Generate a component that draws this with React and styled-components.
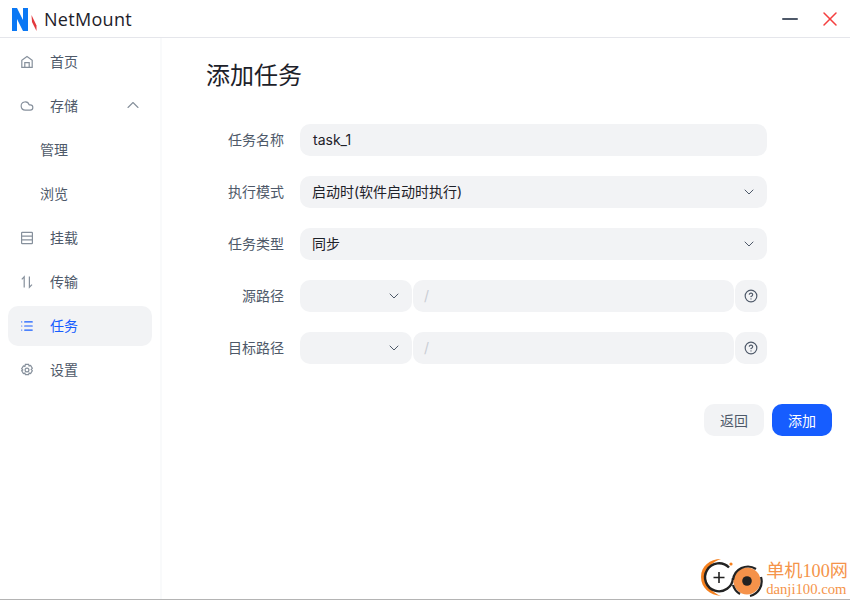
import React from "react";
import styled, { createGlobalStyle } from "styled-components";
import { ChevronDown, ChevronUp, Cloud, List, HelpCircle, Minus, X } from "lucide-react";

const Global = createGlobalStyle`
	html, body { margin: 0; padding: 0; background: #fff; }
	body { font-family: "Inter", "Noto Sans CJK SC", sans-serif; overflow: hidden; }
`;

const Page = styled.div`
	width: 850px;
	height: 600px;
	display: flex;
	flex-direction: column;
	position: relative;
	box-sizing: border-box;
	border-bottom: 1px solid #b4b4b4;
	overflow: hidden;
`;

const TitleBar = styled.header`
	height: 38px;
	flex: none;
	box-sizing: border-box;
	border-bottom: 1px solid #e5e6eb;
	display: flex;
	align-items: center;
	padding: 0 8px 0 11px;
`;

const LogoText = styled.span`
	margin-left: 5px;
	font-family: "Open Sans", sans-serif;
	font-size: 18px;
	color: #1d2129;
	letter-spacing: 0.3px;
`;

const WindowBtns = styled.div`
	margin-left: auto;
	display: flex;
	align-items: center;
	gap: 16px;
`;

const Body = styled.div`
	flex: 1;
	display: flex;
	min-height: 0;
`;

const Side = styled.nav`
	width: 162px;
	flex: none;
	box-sizing: border-box;
	border-right: 2px solid #f9fafb;
	padding: 4px 8px;
	display: flex;
	flex-direction: column;
	gap: 4px;
`;

const MenuItem = styled.div`
	height: 40px;
	border-radius: 10px;
	display: flex;
	align-items: center;
	padding: 0 9px 0 ${(props) => (props.$sub ? 32 : 12)}px;
	font-size: 14px;
	color: ${(props) => (props.$active ? "#165dff" : "#4e5969")};
	background: ${(props) => (props.$active ? "#f2f3f5" : "transparent")};
	svg { flex: none; color: ${(props) => (props.$active ? "#165dff" : "#86909c")}; }
`;

const MenuLabel = styled.span`
	margin-left: ${(props) => (props.$sub ? 0 : 16)}px;
	padding-bottom: 2px;
`;

const MenuArrow = styled.span`
	margin-left: auto;
	display: flex;
	padding-bottom: 2px;
`;

const Main = styled.main`
	flex: 1;
	padding: 19px 18px 0 44px;
	min-width: 0;
`;

const Title = styled.h1`
	margin: 0 0 29px;
	font-size: 24px;
	line-height: 38px;
	font-weight: 400;
	color: #1d2129;
`;

const Form = styled.div`
	display: flex;
	flex-direction: column;
	gap: 20px;
	padding-right: 65px;
`;

const Row = styled.div`
	display: flex;
	align-items: center;
	height: 32px;
`;

const Label = styled.label`
	width: 78px;
	margin-right: 16px;
	padding-bottom: 2px;
	flex: none;
	text-align: right;
	font-size: 14px;
	color: #4e5969;
`;

const Control = styled.div`
	flex: 1;
	display: flex;
	gap: 1px;
	min-width: 0;
`;

const Field = styled.div`
	height: 32px;
	box-sizing: border-box;
	flex: ${(props) => (props.$width ? `0 0 ${props.$width}px` : "1")};
	background: #f2f3f5;
	border-radius: 10px;
	display: flex;
	align-items: center;
	justify-content: ${(props) => (props.$center ? "center" : "flex-start")};
	padding: 0 ${(props) => (props.$center ? 0 : 10)}px 0 ${(props) => (props.$center ? 0 : props.$inset || 12)}px;
	color: #1d2129;
	svg { color: #4e5969; flex: none; }
`;

const Value = styled.span`
	font-size: 14px;
	flex: 1;
	padding-bottom: 2px;
`;

const Slash = styled.span`
	font-size: 14px;
	color: #c9cdd4;
	padding-bottom: 2px;
`;

const Actions = styled.div`
	display: flex;
	justify-content: flex-end;
	gap: 8px;
	margin-top: 40px;
`;

const Btn = styled.button`
	width: 60px;
	height: 32px;
	border: 0;
	border-radius: 10px;
	font-family: inherit;
	font-size: 14px;
	padding: 0 0 1px;
	background: ${(props) => (props.$primary ? "#165dff" : "#f2f3f5")};
	color: ${(props) => (props.$primary ? "#fff" : "#4e5969")};
`;

// 오른쪽 아래 워터마크
const Watermark = styled.div`
	position: absolute;
	right: 2px;
	bottom: 0;
	display: flex;
	align-items: flex-end;
	height: 44px;
`;

const MarkText = styled.div`
	display: flex;
	flex-direction: column;
	align-items: flex-start;
	margin: 0 0 2px 2px;
	font-family: "Liberation Serif", "Noto Sans CJK SC", serif;
	color: #f5944a;
`;

const MarkName = styled.span`
	font-size: 18.2px;
	line-height: 22px;
`;

const MarkUrl = styled.span`
	font-size: 14.7px;
	line-height: 15px;
`;

const LogoMark = () => (
	<svg width="28" height="28" viewBox="0 0 28 28">
		<path d="M1 3h5l6 12V3h5v23h-5L6 14v12H1z" fill="#0b78f4" />
		<path d="M20.5 10l5 10.5V26l-4.5-9z" fill="#e2383c" />
	</svg>
);

const HomeIcon = () => (
	<svg width="14" height="14" viewBox="0 0 14 14" fill="none" stroke="currentColor" strokeWidth="1.2">
		<path d="M1.8 12.4V5.2L7 1.6l5.2 3.6v7.2z" />
		<path d="M4.8 12.4V7.6h4.4v4.8" />
	</svg>
);

const MountIcon = () => (
	<svg width="14" height="14" viewBox="0 0 14 14" fill="none" stroke="currentColor" strokeWidth="1.2">
		<rect x="1.6" y="1.4" width="10.8" height="11.2" rx="0.6" />
		<path d="M1.6 5.1h10.8M1.6 8.9h10.8" />
	</svg>
);

const TransferIcon = () => (
	<svg width="14" height="14" viewBox="0 0 14 14" fill="none" stroke="currentColor" strokeWidth="1.2">
		<path d="M1.8 4.4L4.2 1.8v10.6" />
		<path d="M9.4 1.6v10.6l2.6-2.6" />
	</svg>
);

const GearIcon = () => (
	<svg width="14" height="14" viewBox="0 0 14 14" fill="none" stroke="currentColor" strokeWidth="1.2">
		<path d="M5.4 1.4h3.2l.5 1.5 1.5-.4 1.7 2.8-1.1 1.2 1.1 1.2-1.7 2.8-1.5-.4-.5 1.5H5.4l-.5-1.5-1.5.4-1.7-2.8L2.8 7 1.7 5.8l1.7-2.8 1.5.4z" />
		<circle cx="7" cy="7" r="1.9" />
	</svg>
);

const DanjiLogo = () => (
	<svg width="64" height="44" viewBox="0 0 64 44">
		<path d="M21 4C10 4 1 11 1 22c0 11 9 18 20 19-8-3-15-10-15-19C6 13 12 7 21 4z" fill="#f5801e" />
		<path d="M29 12.5A14 14 0 1 0 33 23" fill="none" stroke="#222" strokeWidth="2.4" />
		<path d="M19 17v11M13.5 22.500h11" stroke="#222" strokeWidth="1.6" />
		<circle cx="47" cy="26" r="13.5" fill="#f5924a" />
		<path d="M33 25a15 15 0 0 1 23-11" fill="none" stroke="#222" strokeWidth="2.2" />
		<path d="M61 22a15 15 0 0 1-11 19" fill="none" stroke="#222" strokeWidth="2.2" />
		<path d="M33 30a15 15 0 0 0 7 9" fill="none" stroke="#222" strokeWidth="2.2" />
		<circle cx="47" cy="26" r="4.8" fill="#222" />
		<circle cx="31" cy="9" r="1.6" fill="#f5801e" />
	</svg>
);

const menu = [
	{ label: "首页", icon: <HomeIcon /> },
	{ label: "存储", icon: <Cloud size={14} />, arrow: true },
	{ label: "管理", sub: true },
	{ label: "浏览", sub: true },
	{ label: "挂载", icon: <MountIcon /> },
	{ label: "传输", icon: <TransferIcon /> },
	{ label: "任务", icon: <List size={14} />, active: true },
	{ label: "设置", icon: <GearIcon /> },
];

const PathRow = ({ label }) => (
	<Row>
		<Label>{label}</Label>
		<Control>
			<Field $width={112}>
				<Value />
				<ChevronDown size={16} strokeWidth={1.5} />
			</Field>
			<Field $inset={11}>
				<Slash>/</Slash>
			</Field>
			<Field $width={32} $center>
				<HelpCircle size={14} />
			</Field>
		</Control>
	</Row>
);

const SelectRow = ({ label, value }) => (
	<Row>
		<Label>{label}</Label>
		<Control>
			<Field>
				<Value>{value}</Value>
				<ChevronDown size={16} strokeWidth={1.5} />
			</Field>
		</Control>
	</Row>
);

export default function App() {
	return (
		<Page>
			<Global />
			<TitleBar>
				<LogoMark />
				<LogoText>NetMount</LogoText>
				<WindowBtns>
					<Minus size={24} strokeWidth={2} color="#4e5969" />
					<X size={24} strokeWidth={1.5} color="#f53f3f" />
				</WindowBtns>
			</TitleBar>
			<Body>
				<Side>
					{menu.map((item) => (
						<MenuItem key={item.label} $active={item.active} $sub={item.sub}>
							{item.icon}
							<MenuLabel $sub={item.sub}>{item.label}</MenuLabel>
							{item.arrow && (
								<MenuArrow>
									<ChevronUp size={20} strokeWidth={1.3} />
								</MenuArrow>
							)}
						</MenuItem>
					))}
				</Side>
				<Main>
					<Title>添加任务</Title>
					<Form>
						<Row>
							<Label>任务名称</Label>
							<Control>
								<Field $inset={13}>
									<Value>task_1</Value>
								</Field>
							</Control>
						</Row>
						<SelectRow label="执行模式" value="启动时(软件启动时执行)" />
						<SelectRow label="任务类型" value="同步" />
						<PathRow label="源路径" />
						<PathRow label="目标路径" />
					</Form>
					<Actions>
						<Btn>返回</Btn>
						<Btn $primary>添加</Btn>
					</Actions>
				</Main>
			</Body>
			<Watermark>
				<DanjiLogo />
				<MarkText>
					<MarkName>单机100网</MarkName>
					<MarkUrl>danji100.com</MarkUrl>
				</MarkText>
			</Watermark>
		</Page>
	);
}
